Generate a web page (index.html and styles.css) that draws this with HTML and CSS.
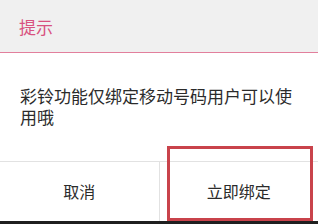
FILE: index.html
```html
<!DOCTYPE html>
<html lang="zh-CN">
<head>
    <meta charset="UTF-8">
    <meta name="viewport" content="width=device-width, initial-scale=1.0">
    <title>提示</title>
    <link rel="stylesheet" href="styles.css">
</head>
<body>
    <div class="dialog">
        <div class="dialog-header">
            <h1>提示</h1>
        </div>
        <div class="dialog-body">
            <p>彩铃功能仅绑定移动号码用户可以使用哦</p>
        </div>
        <div class="dialog-actions">
            <button class="btn">取消</button>
            <button class="btn">立即绑定</button>
        </div>
        <!-- highlight box drawn over the confirm button -->
        <div class="mark"></div>
    </div>
</body>
</html>
```

FILE: styles.css
```css
* {
    margin: 0;
    padding: 0;
    box-sizing: border-box;
}

html, body {
    background: #1f1f1f;
    height: 224px;
    overflow: hidden;
}

body {
    font-family: "Noto Sans CJK SC", "Noto Sans", sans-serif;
}

.dialog {
    position: relative;
    background: #fff;
    width: 318px;
    height: 221px;
}

.dialog-header {
    height: 53px;
    background: #f0f0f0;
    border-bottom: 1px solid #e27f9c;
    display: flex;
    align-items: center;
    padding-left: 19px;
}

.dialog-header h1 {
    font-size: 17px;
    font-weight: normal;
    color: #d8527f;
    line-height: 1;
}

.dialog-body {
    padding: 32px 20px 34px 20px;
}

.dialog-body p {
    font-size: 17px;
    line-height: 21px;
    color: #2b2b2b;
}

.dialog-actions {
    display: flex;
    border-top: 1px solid #e2e2e2;
    height: 60px;
}

.btn {
    flex: 1;
    background: none;
    border: none;
    font-family: inherit;
    font-size: 16px;
    color: #2b2b2b;
    padding-bottom: 1px;
}

.btn + .btn {
    border-left: 1px solid #e2e2e2;
}

.mark {
    position: absolute;
    left: 167px;
    top: 146px;
    width: 146px;
    height: 75px;
    border: 3px solid #c9434b;
}
```
